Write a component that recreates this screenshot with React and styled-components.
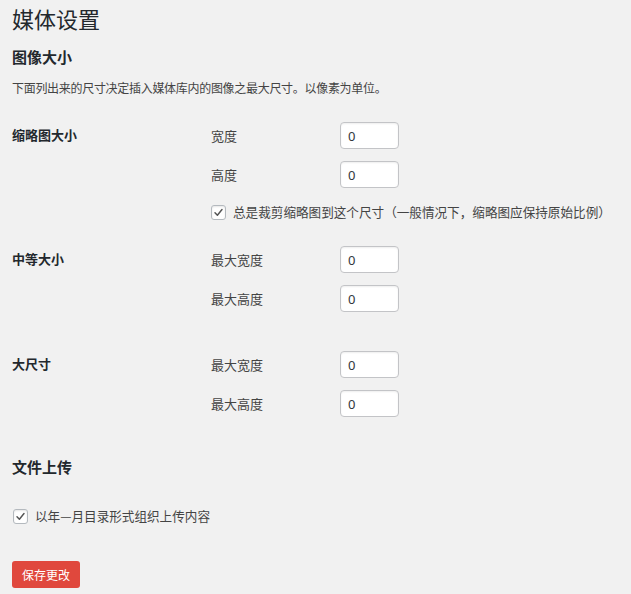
import styled, { createGlobalStyle } from "styled-components";

const GlobalStyle = createGlobalStyle`
    html, body {
        margin: 0;
        padding: 0;
        background: #f1f1f1;
    }
    body {
        font-family: "Noto Sans CJK SC", "Noto Sans", "Liberation Sans", sans-serif;
        color: #444;
    }
`;

function Check() {
    return (
        <Box>
            <svg width="11" height="11" viewBox="0 0 11 11">
                <polyline
                    points="2,5.8 4.4,8.2 9,2.6"
                    fill="none"
                    stroke="#555"
                    strokeWidth="1.5"
                    strokeLinecap="round"
                    strokeLinejoin="round"
                />
            </svg>
        </Box>
    );
}

function Field({ label }) {
    return (
        <FieldRow>
            <FieldLabel>{label}</FieldLabel>
            <NumberInput defaultValue="0" />
        </FieldRow>
    );
}

function App() {
    return (
        <Page>
            <GlobalStyle />
            <Title>媒体设置</Title>
            <SectionTitle>图像大小</SectionTitle>
            <Desc>下面列出来的尺寸决定插入媒体库内的图像之最大尺寸。以像素为单位。</Desc>

            <Table>
                <SettingRow $gap={0}>
                    <RowHead>缩略图大小</RowHead>
                    <Fields>
                        <Field label="宽度" />
                        <Field label="高度" />
                        <CheckLabel $top={3}>
                            <Check />
                            <span>总是裁剪缩略图到这个尺寸（一般情况下，缩略图应保持原始比例）</span>
                        </CheckLabel>
                    </Fields>
                </SettingRow>
                <SettingRow $gap={25}>
                    <RowHead>中等大小</RowHead>
                    <Fields>
                        <Field label="最大宽度" />
                        <Field label="最大高度" />
                    </Fields>
                </SettingRow>
                <SettingRow $gap={39}>
                    <RowHead>大尺寸</RowHead>
                    <Fields>
                        <Field label="最大宽度" />
                        <Field label="最大高度" />
                    </Fields>
                </SettingRow>
            </Table>

            <SectionTitle $top={40}>文件上传</SectionTitle>
            <CheckLabel $top={30} $shift={1}>
                <Check />
                <span>以年—月目录形式组织上传内容</span>
            </CheckLabel>

            <SaveButton>保存更改</SaveButton>
        </Page>
    );
}

const Page = styled.div`
    padding: 4px 12px 7px 12px;
    width: 631px;
    box-sizing: border-box;
`;

const Title = styled.h1`
    margin: 0;
    font-size: 22px;
    font-weight: 400;
    line-height: 29px;
    color: #23282d;
`;

const SectionTitle = styled.h2`
    margin: ${(p) => p.$top || 14}px 0 0;
    font-size: 15px;
    font-weight: 700;
    line-height: 20px;
    color: #23282d;
`;

const Desc = styled.p`
    margin: 12px 0 0;
    font-size: 12px;
    line-height: 18px;
    letter-spacing: -0.3px;
    color: #444;
`;

const Table = styled.div`
    margin-top: 25px;
    display: flex;
    flex-direction: column;
`;

const SettingRow = styled.div`
    display: grid;
    grid-template-columns: 199px minmax(0, 1fr);
    margin-top: ${(p) => p.$gap}px;
`;

const RowHead = styled.div`
    font-size: 13px;
    font-weight: 700;
    line-height: 26px;
    color: #23282d;
`;

const Fields = styled.div`
    display: flex;
    flex-direction: column;
    gap: 12px;
`;

const FieldRow = styled.div`
    display: grid;
    grid-template-columns: 129px 59px;
    align-items: center;
`;

const FieldLabel = styled.span`
    font-size: 13px;
    line-height: 27px;
    color: #444;
`;

const NumberInput = styled.input`
    box-sizing: border-box;
    width: 59px;
    height: 27px;
    margin: 0;
    padding: 0 7px;
    border: 1px solid #c3c4c7;
    border-radius: 4px;
    background: #fff;
    box-shadow: inset 0 1px 2px rgba(0, 0, 0, 0.07);
    font-family: "Noto Sans", "Liberation Sans", sans-serif;
    font-size: 13px;
    color: #32373c;
    outline: none;
`;

const CheckLabel = styled.label`
    display: flex;
    align-items: center;
    gap: 7px;
    height: 18px;
    margin-top: ${(p) => p.$top}px;
    margin-left: ${(p) => p.$shift || 0}px;
    font-size: 12.6px;
    line-height: 18px;
    color: #444;
    white-space: nowrap;
`;

const Box = styled.span`
    box-sizing: border-box;
    width: 15px;
    height: 15px;
    flex: none;
    display: flex;
    align-items: center;
    justify-content: center;
    border: 1px solid #b4b9be;
    border-radius: 3px;
    background: #fff;
    box-shadow: inset 0 1px 2px rgba(0, 0, 0, 0.1);
`;

const SaveButton = styled.button`
    display: block;
    margin-top: 36px;
    width: 68px;
    height: 27px;
    padding: 0;
    border: none;
    border-radius: 3px;
    background: #e0483d;
    color: #fff;
    font-family: "Noto Sans CJK SC", sans-serif;
    font-size: 12px;
    line-height: 27px;
    cursor: pointer;
`;

export default App;
